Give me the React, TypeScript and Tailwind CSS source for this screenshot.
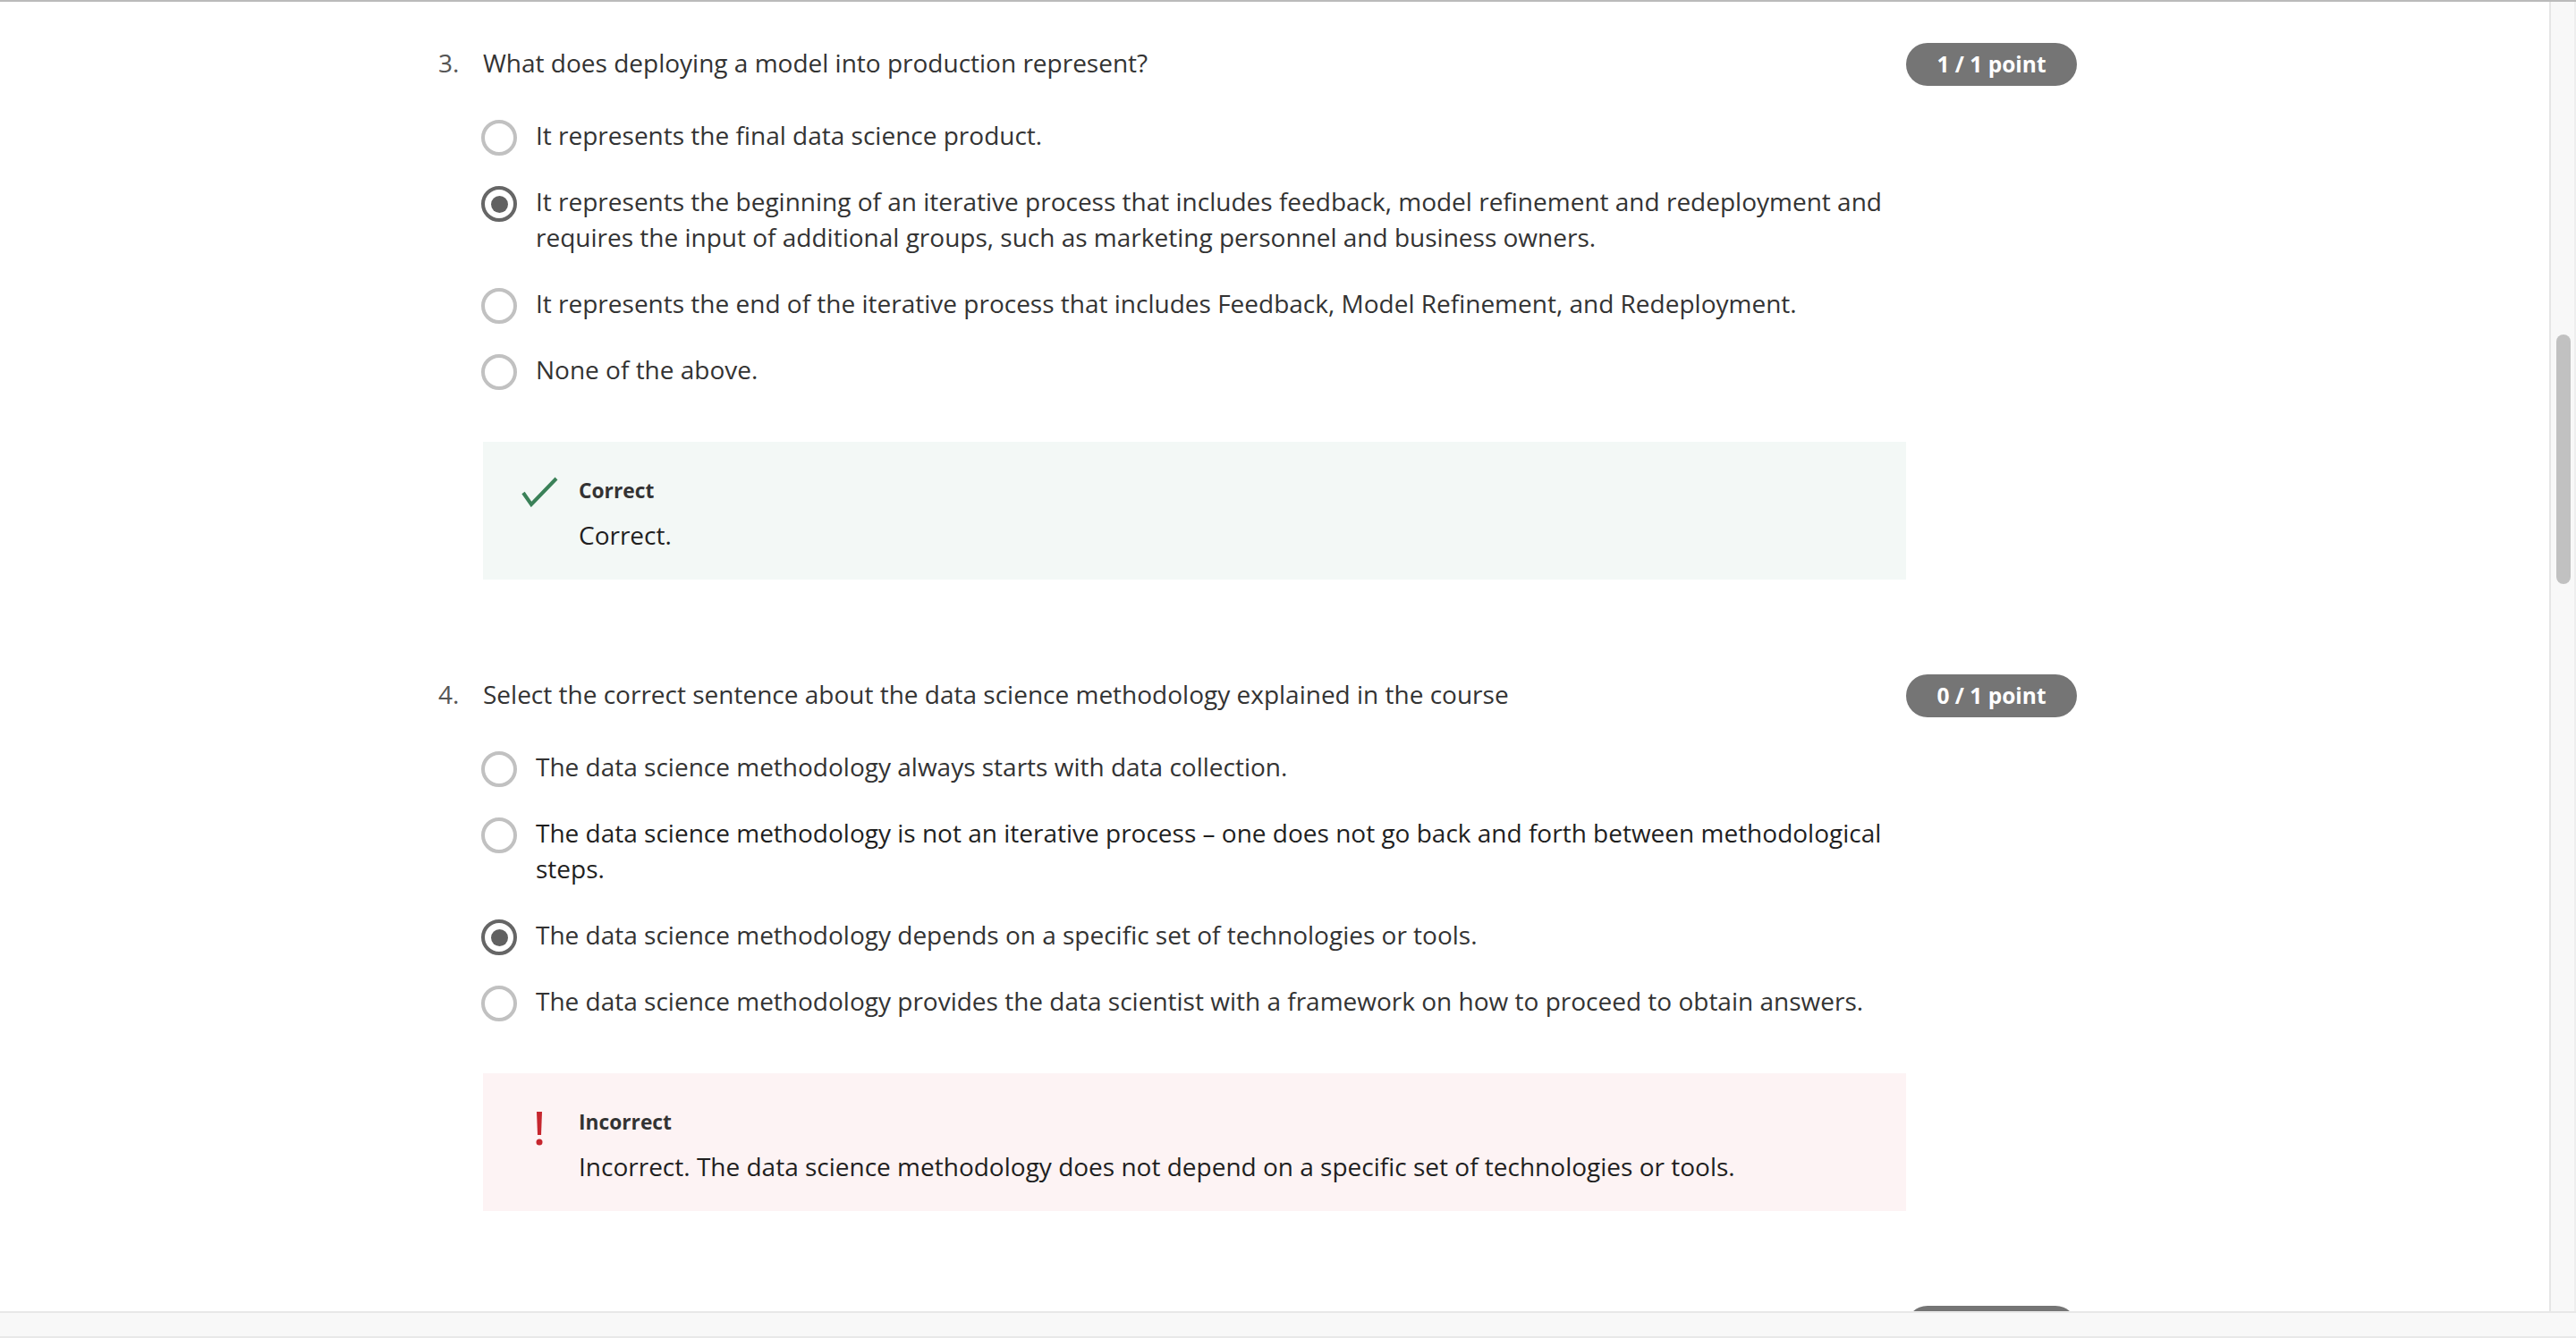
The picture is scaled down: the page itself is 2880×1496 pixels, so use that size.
import React from 'react';

type Option = { text: string; selected?: boolean; dark?: boolean };

interface QuestionProps {
    num: number;
    title: string;
    score: string;
    options: Option[];
    feedback?: { correct: boolean; text: string };
}

function Radio({ selected }: { selected?: boolean }) {
    return (
        <span
            className={
                selected
                    ? 'flex h-[40px] w-[40px] shrink-0 translate-y-[3px] items-center justify-center rounded-full border-[4px] border-[#666666]'
                    : 'flex h-[40px] w-[40px] shrink-0 translate-y-[3px] items-center justify-center rounded-full border-[4px] border-[#c1c1c1]'
            }
        >
            {selected && <span className="h-[19px] w-[19px] rounded-full bg-[#616161]" />}
        </span>
    );
}

function CheckIcon() {
    return (
        <svg width="42" height="34" viewBox="0 0 42 34" fill="none" className="-mt-[1px]">
            <path d="M3 18 L12 31 L40 2" stroke="#3a8158" strokeWidth="4" strokeLinejoin="miter" />
        </svg>
    );
}

function AlertIcon() {
    return (
        <svg width="10" height="38" viewBox="0 0 10 38" className="mt-[3px]">
            <path d="M2 0 H8 L7 26 H3 Z" fill="#c6262e" />
            <circle cx="5" cy="34" r="3.5" fill="#c6262e" />
        </svg>
    );
}

function Feedback({ correct, text }: { correct: boolean; text: string }) {
    return (
        <div
            className={
                correct
                    ? 'mt-[61px] ml-[50px] flex h-[154px] w-[1591px] bg-[#f3f8f6] pt-[40px] pl-[42px]'
                    : 'mt-[61px] ml-[50px] flex h-[154px] w-[1591px] bg-[#fdf3f4] pt-[40px] pl-[42px]'
            }
        >
            <div className="flex w-[65px] shrink-0">
                <div className="flex w-[42px] justify-center">{correct ? <CheckIcon /> : <AlertIcon />}</div>
            </div>
            <div className="flex flex-col">
                <span className="text-[22.75px] font-bold leading-[30px] text-[#333333]">
                    {correct ? 'Correct' : 'Incorrect'}
                </span>
                <span className="mt-[14px] text-[28px] leading-[40px] text-[#1f1f1f]">{text}</span>
            </div>
        </div>
    );
}

function Question({ num, title, score, options, feedback }: QuestionProps) {
    return (
        <div className="flex flex-col">
            <div className="flex h-[48px] items-start">
                <span className="w-[50px] shrink-0 text-[28px] leading-[44px] text-[#555555]">{num > 0 ? `${num}.` : ''}</span>
                <span className="w-[1591px] shrink-0 text-[28px] leading-[44px] text-[#333333]">{title}</span>
                <span className="flex h-[48px] w-[191px] shrink-0 items-center justify-center rounded-full bg-[#757575] text-[24.5px] font-bold text-white">
                    {score}
                </span>
            </div>
            {options.length > 0 && (
                <div className="mt-[35px] ml-[48px] flex w-[1593px] flex-col gap-[34px]">
                    {options.map((o, i) => (
                        <div key={i} className="flex items-start gap-[21px]">
                            <Radio selected={o.selected} />
                            <span
                                className={
                                    o.dark
                                        ? 'text-[28px] leading-[40px] text-[#1f1f1f]'
                                        : 'text-[28px] leading-[40px] text-[#333333]'
                                }
                            >
                                {o.text}
                            </span>
                        </div>
                    ))}
                </div>
            )}
            {feedback && <Feedback correct={feedback.correct} text={feedback.text} />}
        </div>
    );
}

export default function App() {
    return (
        <div
            className="flex h-[1496px] w-[2880px] flex-col overflow-hidden bg-[#f8f8f8]"
            style={{ fontFamily: '"Open Sans", "Noto Sans", sans-serif' }}
        >
            <div className="flex h-[1466px] border-t-2 border-[#bbbbbb]">
                <div className="flex-1 overflow-hidden border-r-2 border-[#e6e6e6] bg-white pt-[46px] pl-[490px]">
                    <div className="flex flex-col gap-[106px]">
                        <Question
                            num={3}
                            title="What does deploying a model into production represent?"
                            score="1 / 1 point"
                            options={[
                                { text: 'It represents the final data science product.' },
                                {
                                    text: 'It represents the beginning of an iterative process that includes feedback, model refinement and redeployment and requires the input of additional groups, such as marketing personnel and business owners.',
                                    selected: true,
                                },
                                {
                                    text: 'It represents the end of the iterative process that includes Feedback, Model Refinement, and Redeployment.',
                                },
                                { text: 'None of the above.' },
                            ]}
                            feedback={{ correct: true, text: 'Correct.' }}
                        />
                        <Question
                            num={4}
                            title="Select the correct sentence about the data science methodology explained in the course"
                            score="0 / 1 point"
                            options={[
                                { text: 'The data science methodology always starts with data collection.' },
                                {
                                    text: 'The data science methodology is not an iterative process – one does not go back and forth between methodological steps.',
                                    dark: true,
                                },
                                {
                                    text: 'The data science methodology depends on a specific set of technologies or tools.',
                                    selected: true,
                                },
                                {
                                    text: 'The data science methodology provides the data scientist with a framework on how to proceed to obtain answers.',
                                },
                            ]}
                            feedback={{
                                correct: false,
                                text: 'Incorrect. The data science methodology does not depend on a specific set of technologies or tools.',
                            }}
                        />
                        {/* next question, only the top of its score pill is visible */}
                        <Question num={0} title="" score="" options={[]} />
                    </div>
                </div>
                {/* vertical scrollbar */}
                <div className="w-[28px] border-r-2 border-[#eeeeee] bg-[#f8f8f8] pt-[372px] pl-[6px]">
                    <div className="h-[279px] w-[16px] rounded-full bg-[#c1c1c1]" />
                </div>
            </div>
            {/* horizontal scrollbar track */}
            <div className="h-[30px] border-t-2 border-b-2 border-[#e8e8e8] bg-[#f8f8f8]" />
        </div>
    );
}
